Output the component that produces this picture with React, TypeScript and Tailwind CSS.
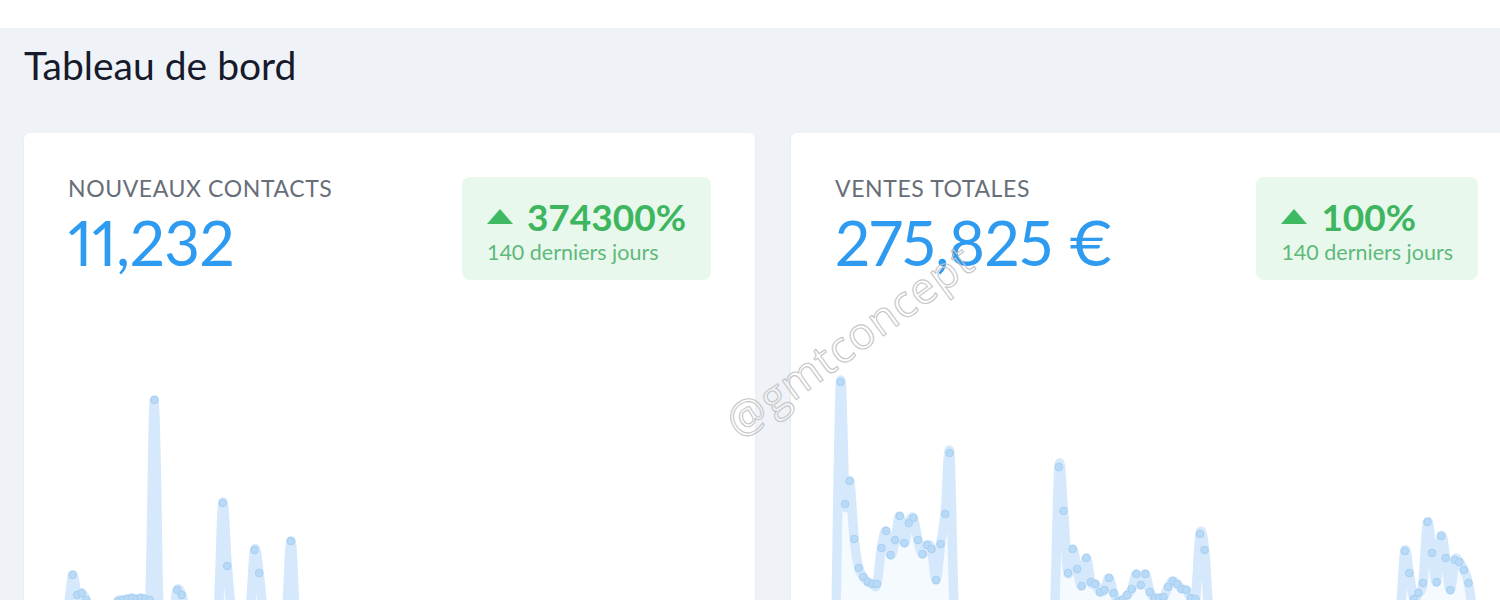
// Dashboard: two KPI cards with sparkline charts

import { memo } from 'react';

const BASE = 612; // y of a zero value, in page px
const TOP = 278; // page y where the chart svg starts
const STEP = 4.55;
const COUNT = 141;

// sparse data: index -> page y
const contactsData: Record<number, number> = {
  1: 573, 2: 593, 3: 591, 4: 598, 11: 599, 12: 598, 13: 597, 14: 596, 15: 597,
  16: 596, 17: 597, 18: 598, 19: 398, 24: 588, 25: 593, 34: 501, 35: 564,
  41: 548, 42: 571, 49: 539, 75: 606, 76: 605, 90: 606, 110: 606, 111: 605,
  125: 606, 126: 605, 127: 606,
};

const salesData: Record<number, number> = {
  1: 380, 2: 502, 3: 479, 4: 537, 5: 566, 6: 575, 7: 580, 8: 582, 9: 582,
  10: 546, 11: 529, 12: 553, 13: 538, 14: 514, 15: 541, 16: 521, 17: 516,
  18: 538, 19: 552, 20: 543, 21: 547, 22: 578, 23: 542, 24: 512, 25: 451,
  49: 465, 50: 509, 51: 571, 52: 547, 53: 567, 54: 584, 55: 556, 56: 580,
  57: 582, 58: 590, 59: 588, 60: 576, 61: 591, 62: 599, 63: 598, 64: 593,
  65: 587, 66: 572, 67: 583, 68: 572, 69: 590, 70: 596, 71: 596, 72: 595,
  73: 585, 74: 579, 75: 582, 76: 587, 77: 588, 78: 596, 79: 597, 80: 532,
  81: 548, 125: 549, 126: 571, 127: 597, 128: 591, 129: 581, 130: 520,
  131: 551, 132: 580, 133: 534, 134: 556, 135: 588, 136: 558, 137: 560,
  138: 568, 139: 581,
};

function toPoints(data: Record<number, number>, startX: number) {
  const pts: [number, number][] = [];
  for (let i = 0; i < COUNT; i++) {
    const y = data[i] ?? BASE;
    pts.push([startX + i * STEP, y - TOP]);
  }
  return pts;
}

// catmull-rom -> cubic bezier
function smoothPath(pts: [number, number][]) {
  let d = `M${pts[0][0]},${pts[0][1]}`;
  for (let i = 0; i < pts.length - 1; i++) {
    const p0 = pts[i - 1] ?? pts[i];
    const p1 = pts[i];
    const p2 = pts[i + 1];
    const p3 = pts[i + 2] ?? p2;
    const c1x = p1[0] + (p2[0] - p0[0]) / 6;
    const c1y = p1[1] + (p2[1] - p0[1]) / 6;
    const c2x = p2[0] - (p3[0] - p1[0]) / 6;
    const c2y = p2[1] - (p3[1] - p1[1]) / 6;
    d += ` C${c1x.toFixed(1)},${c1y.toFixed(1)} ${c2x.toFixed(1)},${c2y.toFixed(1)} ${p2[0].toFixed(1)},${p2[1].toFixed(1)}`;
  }
  return d;
}

const Sparkline = ({ data, startX }: { data: Record<number, number>; startX: number }) => {
  const pts = toPoints(data, startX);
  const line = smoothPath(pts);
  const last = pts[pts.length - 1];
  const area = `${line} L${last[0]},${BASE - TOP + 20} L${pts[0][0]},${BASE - TOP + 20} Z`;
  return (
    <svg width="731" height="340" viewBox="0 0 731 340" className="block -mx-[44px] mt-0">
      <path d={area} fill="#eef6fe" opacity="0.6" />
      <path d={line} fill="none" stroke="#d6e9fc" strokeWidth="9.5" strokeLinejoin="round" strokeLinecap="round" />
      {pts.map(([x, y], i) => (
        <circle key={i} cx={x} cy={y} r="3.8" fill="#b8daf6" stroke="#a6cff2" strokeWidth="1" />
      ))}
    </svg>
  );
};

interface KpiProps {
  label: string;
  value: string;
  change: string;
  data: Record<number, number>;
  startX: number;
}

const KpiCard = memo(function KpiCard({ label, value, change, data, startX }: KpiProps) {
  return (
    <div className="w-[731px] shrink-0 bg-white rounded-md shadow-[0_1px_3px_rgba(15,23,42,0.06)] pt-[44px] px-[44px] h-[600px]">
      <div className="flex items-start justify-between">
        <div>
          <div className="text-[23px] leading-none text-[#686e78] tracking-[0.6px]">{label}</div>
          <div className="mt-[11px] text-[62px] leading-none text-[#2e9bf1] tracking-[-0.5px] [font-variant-numeric:proportional-nums]">{value}</div>
        </div>
        <div className="bg-[#e8f8ed] rounded-lg pl-[25px] pr-[25px] pt-[21px] pb-[16px]">
          <div className="flex items-center gap-[14px]">
            <svg width="26" height="15" viewBox="0 0 26 15">
              <path d="M13 0 L26 15 L0 15 Z" fill="#3dba62" />
            </svg>
            <span className="text-[37px] leading-none font-bold text-[#3db65f]">{change}</span>
          </div>
          <div className="mt-[7px] text-[21.5px] leading-none text-[#5fb97a]">140 derniers jours</div>
        </div>
      </div>
      <Sparkline data={data} startX={startX} />
    </div>
  );
});

export default function App() {
  return (
    <div className="w-[1500px] h-[613px] bg-white overflow-hidden font-['Lato',sans-serif] relative">
      <div className="h-[28px]" />
      <div className="h-[572px] bg-[#eff3f8] overflow-hidden px-[24px]">
        <h1 className="pt-[16px] text-[39px] leading-[42px] text-[#161a2b]">Tableau de bord</h1>
        <div className="mt-[47px] flex gap-[36px]">
          <KpiCard label="NOUVEAUX CONTACTS" value="11,232" change="374300%" data={contactsData} startX={44} />
          <KpiCard label="VENTES TOTALES" value="275,825 €" change="100%" data={salesData} startX={45} />
        </div>
      </div>
      {/* watermark */}
      <div className="absolute left-[702px] top-[318px] -rotate-[36deg] text-[44px] leading-none text-transparent [-webkit-text-stroke:1.1px_#c6c6c6] tracking-[1px] font-['Open_Sans',sans-serif] pointer-events-none">
        @gmtconcept
      </div>
    </div>
  );
}
